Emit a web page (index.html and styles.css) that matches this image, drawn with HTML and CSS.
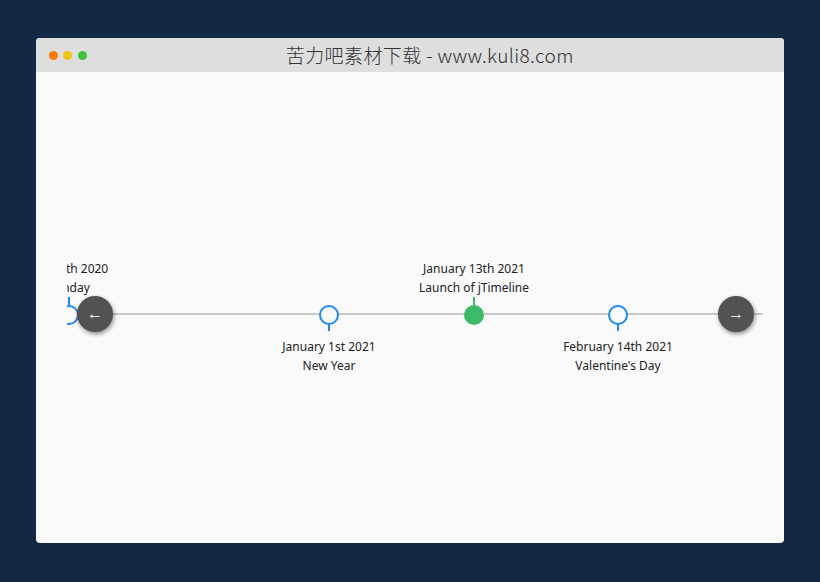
FILE: index.html
```html
<!DOCTYPE html>
<html lang="en">
<head>
<meta charset="utf-8">
<title>jTimeline</title>
<link rel="stylesheet" href="styles.css">
</head>
<body>
<div class="window">
  <div class="titlebar">
    <div class="dots">
      <span class="dot dot-red"></span>
      <span class="dot dot-yellow"></span>
      <span class="dot dot-green"></span>
    </div>
    <div class="title">苦力吧素材下载 - www.kuli8.com</div>
  </div>
  <div class="content">
    <div class="timeline">
      <div class="track"></div>
      <div class="event event-up" style="left:2px">
        <div class="upper"><div class="label">April 5th 2020<br>Sunday</div><div class="stem"></div></div>
        <div class="node"></div>
        <div class="lower"></div>
      </div>
      <div class="event event-down" style="left:262px">
        <div class="upper"></div>
        <div class="node"></div>
        <div class="lower"><div class="stem"></div><div class="label">January 1st 2021<br>New Year</div></div>
      </div>
      <div class="event event-up" style="left:407px">
        <div class="upper"><div class="label">January 13th 2021<br>Launch of jTimeline</div><div class="stem stem-active"></div></div>
        <div class="node node-active"></div>
        <div class="lower"></div>
      </div>
      <div class="event event-down" style="left:551px">
        <div class="upper"></div>
        <div class="node"></div>
        <div class="lower"><div class="stem"></div><div class="label">February 14th 2021<br>Valentine's Day</div></div>
      </div>
      <button class="nav nav-prev" type="button">&larr;</button>
      <button class="nav nav-next" type="button">&rarr;</button>
    </div>
  </div>
</div>
</body>
</html>
```
FILE: styles.css
```css
html, body {
  margin: 0;
  padding: 0;
}
body {
  background: #132845;
  width: 820px;
  height: 582px;
  overflow: hidden;
  padding-top: 38px;
  box-sizing: border-box;
}
.window {
  width: 748px;
  height: 505px;
  margin-left: 36px;
  background: #fafafa;
  border-radius: 4px;
  overflow: hidden;
  display: flex;
  flex-direction: column;
}
.titlebar {
  height: 34px;
  flex: none;
  background: #dedede;
  display: flex;
  align-items: center;
}
.dots {
  display: flex;
  gap: 5.5px;
  padding-left: 12.5px;
  width: 38px;
}
.dot {
  width: 9px;
  height: 9px;
  border-radius: 50%;
  display: block;
}
.dot-red { background: #ff7a00; }
.dot-yellow { background: #f2c21b; }
.dot-green { background: #3ec43b; }
.title {
  flex: 1;
  text-align: center;
  padding-right: 11px;
  font-family: "Noto Sans CJK SC", "Noto Sans", sans-serif;
  font-weight: 300;
  font-size: 19px;
  letter-spacing: 0.4px;
  color: #333;
  line-height: 34px;
}
.content {
  flex: 1;
  padding: 186px 21px 0 31px;
}
.timeline {
  position: relative;
  height: 130px;
  overflow: hidden;
  font-family: "Noto Sans", sans-serif;
  font-size: 12px;
  color: #222;
}
.track {
  margin-top: 55px;
  height: 2px;
  background: #c8c8c8;
}
.event {
  position: absolute;
  top: 0;
  width: 160px;
  margin-left: -80px;
  display: flex;
  flex-direction: column;
  align-items: center;
}
.upper {
  height: 47px;
  display: flex;
  flex-direction: column;
  justify-content: flex-end;
  align-items: center;
}
.lower {
  display: flex;
  flex-direction: column;
  align-items: center;
}
.label {
  text-align: center;
  line-height: 19px;
  white-space: nowrap;
}
.stem {
  width: 2px;
  background: #1e88f0;
}
.event-up .stem {
  height: 8px;
}
.event-down .stem {
  height: 6px;
  margin-bottom: 6px;
}
.stem-active {
  background: #3cba68;
}
.node {
  width: 20px;
  height: 20px;
  box-sizing: border-box;
  border: 2.5px solid #1e88f0;
  border-radius: 50%;
  background: #fafafa;
}
.node-active {
  background: #3cba68;
  border-color: #3cba68;
}
.nav {
  position: absolute;
  top: 38px;
  width: 36px;
  height: 36px;
  border: none;
  border-radius: 50%;
  padding: 0;
  background: #525252;
  color: #fff;
  font-family: "Liberation Sans", sans-serif;
  font-size: 16px;
  line-height: 36px;
  text-align: center;
  box-shadow: 1px 2px 4px rgba(0, 0, 0, 0.45);
  cursor: pointer;
}
.nav-prev { left: 10px; }
.nav-next { right: 9px; }
```
